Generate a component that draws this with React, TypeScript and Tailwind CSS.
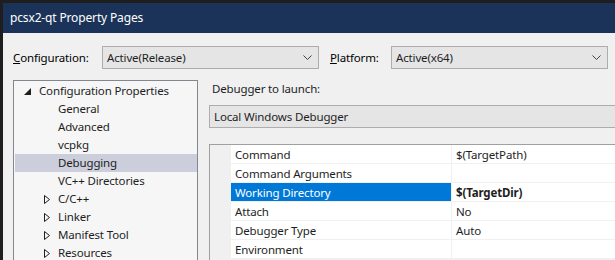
import React from 'react';

function Chevron() {
  return (
    <svg width="9" height="5" viewBox="0 0 9 5" className="shrink-0">
      <polyline points="0.5,0.5 4.5,4.5 8.5,0.5" fill="none" stroke="#404040" strokeWidth="1" />
    </svg>
  );
}

function Expanded() {
  return (
    <svg width="7" height="7" viewBox="0 0 7 7" className="shrink-0">
      <polygon points="7,0 7,7 0,7" fill="#1e1e1e" />
    </svg>
  );
}

function Collapsed() {
  return (
    <svg width="6" height="9" viewBox="0 0 6 9" className="shrink-0">
      <polygon points="0.5,0.5 5.5,4.5 0.5,8.5" fill="none" stroke="#1e1e1e" strokeWidth="1" />
    </svg>
  );
}

const tree = [
  { name: 'General', kind: 'leaf' },
  { name: 'Advanced', kind: 'leaf' },
  { name: 'vcpkg', kind: 'leaf' },
  { name: 'Debugging', kind: 'leaf', selected: true },
  { name: 'VC++ Directories', kind: 'leaf' },
  { name: 'C/C++', kind: 'folder' },
  { name: 'Linker', kind: 'folder' },
  { name: 'Manifest Tool', kind: 'folder' },
  { name: 'Resources', kind: 'folder' },
];

const props = [
  { name: 'Command', value: '$(TargetPath)' },
  { name: 'Command Arguments', value: '' },
  { name: 'Working Directory', value: '$(TargetDir)', selected: true },
  { name: 'Attach', value: 'No' },
  { name: 'Debugger Type', value: 'Auto' },
  { name: 'Environment', value: '' },
];

export default function App() {
  return (
    <div className="w-[615px] h-[260px] overflow-hidden bg-[#1e1e1e] pl-[3px] pt-[3px] font-['Segoe_UI','Noto_Sans',sans-serif] text-[11.5px] tracking-[-0.15px] leading-none text-[#1e1e1e]">
      <div className="h-full flex flex-col bg-[#f0f0f0]">
        <div className="h-[30px] shrink-0 bg-[#1b3358] text-white flex items-center pl-[7px] text-[12px]">
          pcsx2-qt Property Pages
        </div>
        <div className="flex items-center gap-[11px] pl-[10px] mt-[13px]">
          <div className="flex items-center">
            <span className="w-[89px] text-black">
              <span className="underline">C</span>onfiguration:
            </span>
            <div className="w-[217px] h-[23px] bg-[#e5e5e5] border border-[#adadad] flex items-center justify-between pl-[4px] pr-[6px]">
              <span>Active(Release)</span>
              <Chevron />
            </div>
          </div>
          <div className="flex items-center">
            <span className="w-[61px] text-black">
              <span className="underline">P</span>latform:
            </span>
            <div className="w-[217px] h-[23px] bg-[#e5e5e5] border border-[#adadad] flex items-center justify-between pl-[4px] pr-[6px]">
              <span>Active(x64)</span>
              <Chevron />
            </div>
          </div>
        </div>
        <div className="flex flex-1 mt-[11px] pl-[10px]">
          <div className="w-[185px] shrink-0 border border-[#828790] bg-[#f6f6f6] pt-[1px]">
            <div className="h-[18px] flex items-center pl-[10px] gap-[8px]">
              <Expanded />
              <span>Configuration Properties</span>
            </div>
            {tree.map((t) => (
              <div
                key={t.name}
                className={`h-[18px] flex items-center ${t.selected ? 'bg-[#cccedb] ml-[1px] pl-[29px]' : 'pl-[30px]'}`}
              >
                <span className="w-[14px] flex items-center">{t.kind === 'folder' && <Collapsed />}</span>
                <span>{t.name}</span>
              </div>
            ))}
          </div>
          <div className="flex-1 flex flex-col pl-[11px]">
            <div className="h-[25px] pt-[2px] pl-[3px] leading-[14px]">Debugger to launch:</div>
            <div className="h-[23px] shrink-0 bg-[#e5e5e5] border border-[#adadad] border-r-0 flex items-center pl-[4px]">
              Local Windows Debugger
            </div>
            <div className="mt-[16px] flex-1 border-t border-l border-[#a0a0a0] flex">
              <div className="w-[21px] bg-[#f0f0f0]" />
              <div className="flex-1 flex flex-col">
                {props.map((p) => (
                  <div key={p.name} className="h-[19px] shrink-0 flex border-b border-[#f0f0f0]">
                    <div
                      className={`w-[221px] flex items-center pl-[4px] pt-[1px] border-r border-[#f0f0f0] ${
                        p.selected ? 'bg-[#0078d7] text-white' : 'bg-white'
                      }`}
                    >
                      {p.name}
                    </div>
                    <div className={`flex-1 flex items-center pl-[4px] pt-[1px] bg-white ${p.selected ? 'font-bold' : ''}`}>
                      {p.value}
                    </div>
                  </div>
                ))}
              </div>
            </div>
          </div>
        </div>
      </div>
    </div>
  );
}
